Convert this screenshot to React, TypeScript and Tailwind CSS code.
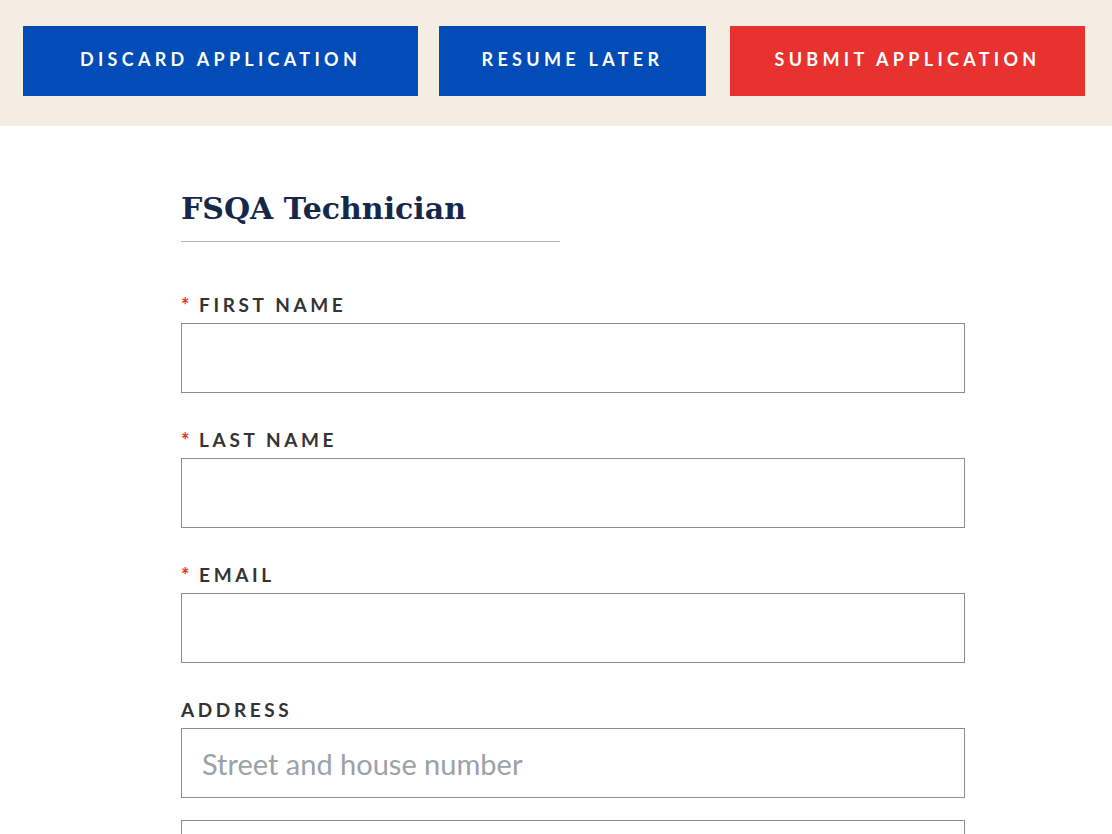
import React from "react";

const fields = [
  { label: "FIRST NAME", required: true },
  { label: "LAST NAME", required: true },
  { label: "EMAIL", required: true },
];

function Label({ text, required }: { text: string; required?: boolean }) {
  return (
    <label className="flex items-center h-6 text-[19px] font-bold tracking-[3.6px] text-[#333333] mb-[6px]">
      {required && <span className="text-[#e8312f] mr-[6px] text-[20px] leading-none">*</span>}
      {text}
    </label>
  );
}

export default function App() {
  return (
    <div className="min-h-[834px] bg-white" style={{ fontFamily: "Lato, 'Open Sans', sans-serif" }}>
      {/* action bar */}
      <div className="h-[126px] bg-[#f5ece2] flex items-start pt-[26px] pl-[23px]">
        <button className="w-[395px] h-[70px] pb-[3px] bg-[#014cb6] text-white text-[18px] font-bold tracking-[4.3px]">
          DISCARD APPLICATION
        </button>
        <button className="ml-[21px] w-[267px] h-[70px] pb-[3px] bg-[#014cb6] text-white text-[18px] font-bold tracking-[4.3px]">
          RESUME LATER
        </button>
        <button className="ml-[24px] w-[355px] h-[70px] pb-[3px] bg-[#e8322f] text-white text-[18px] font-bold tracking-[4.3px]">
          SUBMIT APPLICATION
        </button>
      </div>

      <div className="ml-[181px] w-[784px] pt-[62px]">
        <div className="w-[379px] border-b border-[#b3b3b3] pb-[11px]">
          <h1
            className="text-[30px] leading-[42px] font-bold text-[#16284a]"
            style={{ fontFamily: "'DejaVu Serif', 'Liberation Serif', serif" }}
          >
            FSQA Technician
          </h1>
        </div>

        <form className="pt-[51px]">
          {fields.map((f) => (
            <div key={f.label} className="mb-[35px]">
              <Label text={f.label} required={f.required} />
              <input type="text" className="block w-full h-[70px] border border-[#8c8c8c] bg-white px-5 text-[29px] outline-none" />
            </div>
          ))}
          <div>
            <Label text="ADDRESS" />
            <input
              type="text"
              placeholder="Street and house number"
              className="block w-full h-[70px] border border-[#8c8c8c] bg-white px-5 text-[29px] text-[#333] placeholder:text-[#9aa1a8] outline-none"
            />
            <input type="text" className="block w-full h-[70px] mt-[22px] border border-[#8c8c8c] bg-white px-5 text-[29px] outline-none" />
          </div>
        </form>
      </div>
    </div>
  );
}
